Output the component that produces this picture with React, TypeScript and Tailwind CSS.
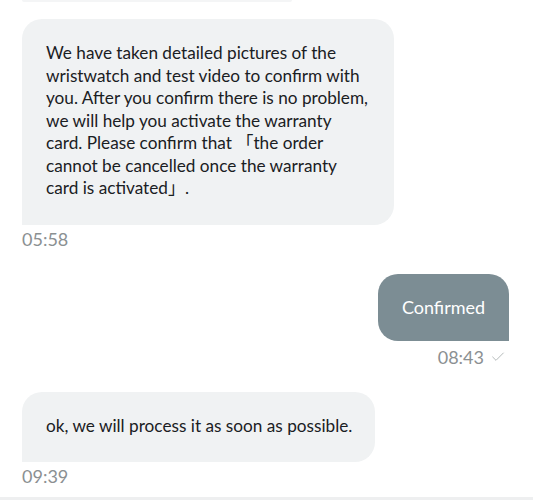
import { Check } from "lucide-react";

type Msg = {
  text: string;
  time: string;
  mine?: boolean;
};

const messages: Msg[] = [
  {
    text: "We have taken detailed pictures of the wristwatch and test video to confirm with you. After you confirm there is no problem, we will help you activate the warranty card. Please confirm that \u300cthe order cannot be cancelled once the warranty card is activated\u300d.",
    time: "05:58",
  },
  { text: "Confirmed", time: "08:43", mine: true },
  { text: "ok, we will process it as soon as possible.", time: "09:39" },
];

function Bubble({ msg }: { msg: Msg }) {
  if (msg.mine) {
    return (
      <div className="flex flex-col items-end">
        <div className="flex h-[67px] w-[131px] items-center justify-center rounded-[20px] rounded-br-none bg-[#7c8d94] text-[18px] text-white">
          {msg.text}
        </div>
        <div className="mt-[5px] flex items-center gap-[6px] pr-[3px] text-[18px] leading-[22px] text-[#8b9092]">
          <span>{msg.time}</span>
          <Check size={16} strokeWidth={1.1} className="text-[#9aa0a2]" />
        </div>
      </div>
    );
  }

  return (
    <div className="flex flex-col items-start">
      <div className="rounded-[20px] rounded-bl-none bg-[#f0f2f3] pb-[25px] pl-6 pr-[23px] pt-[23px] text-[17.2px] leading-[22.5px] text-[#1a2023]">
        <p className="max-w-[325px]">{msg.text}</p>
      </div>
      <div className="mt-[3px] text-[18px] leading-[22px] text-[#8b9092]">
        {msg.time}
      </div>
    </div>
  );
}

export default function App() {
  return (
    <div className="flex h-[500px] w-[533px] flex-col overflow-hidden bg-white font-['Lato','Noto_Sans_CJK_JP',sans-serif]">
      <div className="ml-[22px] h-[2px] w-[270px] rounded-b-[20px] bg-[#f4f5f6]" />
      <div className="flex flex-1 flex-col pl-[22px] pr-[24px] pt-[17px]">
        <div>
          <Bubble msg={messages[0]} />
        </div>
        <div className="mt-[24px]">
          <Bubble msg={messages[1]} />
        </div>
        <div className="mt-[24px]">
          <Bubble msg={messages[2]} />
        </div>
      </div>
      <div className="h-[3px] bg-[#eeeff0]" />
    </div>
  );
}
